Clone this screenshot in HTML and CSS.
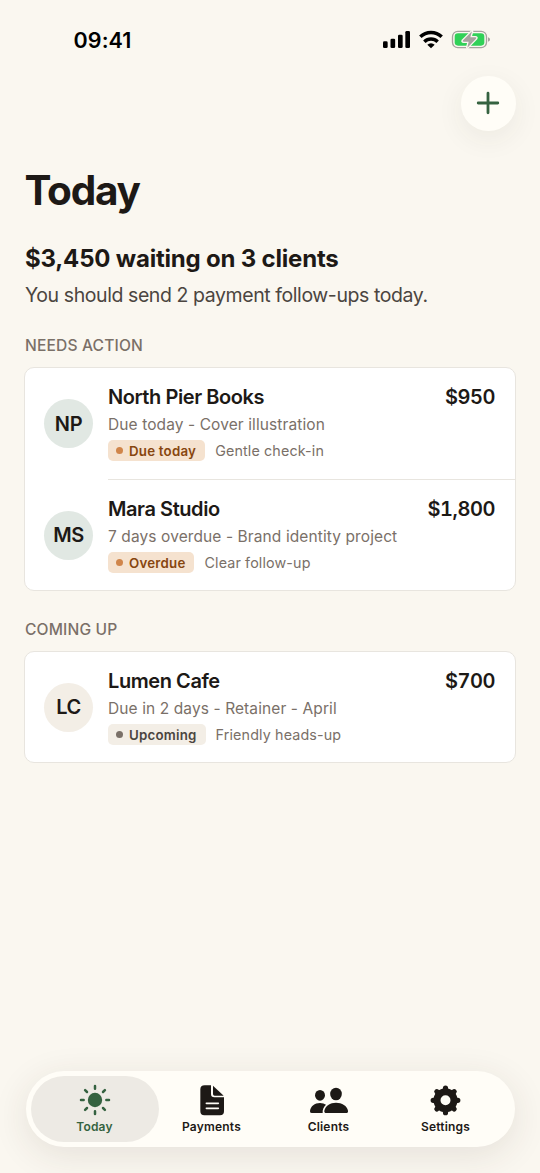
FILE: index.html
```html
<!DOCTYPE html>
<html lang="en">
<head>
<meta charset="utf-8">
<title>Today</title>
<link rel="stylesheet" href="styles.css">
</head>
<body>
<div class="screen">
  <header class="status">
    <span class="time">09:41</span>
    <svg class="status-icons" viewBox="0 0 324 57" aria-hidden="true">
      <g fill="#000">
        <rect x="0" y="34" width="14" height="20" rx="4"/>
        <rect x="22.500" y="26" width="14" height="28" rx="4"/>
        <rect x="45" y="14" width="14" height="40" rx="4"/>
        <rect x="67" y="3" width="14" height="51" rx="4"/>
      </g>
      <g fill="none" stroke="#000" stroke-width="10.500">
        <path d="M112 20.500a46 46 0 0 1 64 0"/>
        <path d="M124 35a29 29 0 0 1 40 0"/>
      </g>
      <path d="M144 55l-11-11a15.500 15.500 0 0 1 22 0z"/>
      <rect x="208.500" y="4" width="102" height="49" rx="16" fill="none" stroke="#a5a39f" stroke-width="4"/>
      <path d="M315 21.500c8 2.500 8 11 0 13.500z" fill="#a5a39f"/>
      <rect x="215" y="10" width="89" height="37" rx="10" fill="#30d158"/>
      <path d="M267 4L240 31Q237 35 242 35H257L253 53L279 26Q282 22 277 22H262Z" fill="#a5a39f" stroke="#faf7f0" stroke-width="8" stroke-linejoin="round" paint-order="stroke"/>
    </svg>
  </header>
  <div class="toolbar">
    <button class="add" aria-label="Add">
      <svg viewBox="0 0 24 24"><path d="M12 2.200v19.600M2.200 12h19.600"/></svg>
    </button>
  </div>
  <main class="content">
    <h1 class="title">Today</h1>
    <p class="summary">$3,450 waiting on 3 clients</p>
    <p class="hint">You should send 2 payment follow-ups today.</p>

    <h2 class="section">NEEDS ACTION</h2>
    <section class="card">
      <article class="row">
        <div class="avatar">NP</div>
        <div class="info">
          <div class="line"><span class="name">North Pier Books</span><span class="amount">$950</span></div>
          <div class="detail">Due today - Cover illustration</div>
          <div class="meta"><span class="badge"><i class="dot"></i>Due today</span><span class="note">Gentle check-in</span></div>
        </div>
      </article>
      <article class="row">
        <div class="avatar">MS</div>
        <div class="info">
          <div class="line"><span class="name">Mara Studio</span><span class="amount">$1,800</span></div>
          <div class="detail">7 days overdue - Brand identity project</div>
          <div class="meta"><span class="badge"><i class="dot"></i>Overdue</span><span class="note">Clear follow-up</span></div>
        </div>
      </article>
    </section>

    <h2 class="section">COMING UP</h2>
    <section class="card">
      <article class="row calm">
        <div class="avatar">LC</div>
        <div class="info">
          <div class="line"><span class="name">Lumen Cafe</span><span class="amount">$700</span></div>
          <div class="detail">Due in 2 days - Retainer - April</div>
          <div class="meta"><span class="badge"><i class="dot"></i>Upcoming</span><span class="note">Friendly heads-up</span></div>
        </div>
      </article>
    </section>
  </main>
  <nav class="tabs">
    <a class="tab active">
      <svg viewBox="-60 -48 120 96"><circle r="21.500"/><g stroke="currentColor" stroke-width="7.500" stroke-linecap="round"><path d="M0-42v8M0 42v-8M-42 0h8M42 0h-8M-29.700-29.700l5.700 5.700M29.700-29.700l-5.700 5.700M-29.700 29.700l5.700-5.700M29.700 29.700l-5.700-5.700"/></g></svg>
      <span>Today</span>
    </a>
    <a class="tab">
      <svg viewBox="-60 -48 120 96"><path d="M-22-44H-3V-18Q-3-8 7-8H36V34Q36 46 24 46H-23Q-35 46-35 34V-32Q-35-44-22-44Z"/><path d="M3-43L35-13H8Q3-13 3-18Z"/><path d="M-17 10H19M-17 25H19" stroke="#fffdf7" stroke-width="5" stroke-linecap="round"/></svg>
      <span>Payments</span>
    </a>
    <a class="tab">
      <svg viewBox="-60 -48 120 96"><ellipse cx="-27" cy="-14" rx="15" ry="16"/><path d="M-52 39Q-58 39-57 33C-55 18-43 9-27 9Q-16 9-9 14C-16 20-20 29-19 39Z"/><ellipse cx="21" cy="-18" rx="17.500" ry="19"/><path d="M-8 39Q-15 39-14 32C-11 17 3 8 21 8S54 17 57 32Q58 39 51 39Z"/></svg>
      <span>Clients</span>
    </a>
    <a class="tab">
      <svg viewBox="-60 -48 120 96"><g transform="translate(-1.500 1)" stroke="currentColor"><circle r="25.500" fill="none" stroke-width="21"/><path d="M0-37v6M0 37v-6M-37 0h6M37 0h-6M-26-26l4 4M26-26l-4 4M-26 26l4-4M26 26l-4-4" stroke-width="15.500" stroke-linecap="round"/></g></svg>
      <span>Settings</span>
    </a>
  </nav>
</div>
</body>
</html>
```
FILE: styles.css
```css
* { box-sizing: border-box; }
body { margin: 0; background: #faf7f0; color: #1d1916; font-family: Inter, "Liberation Sans", sans-serif; }
h1, h2, p { margin: 0; }
.screen { height: 1173px; display: flex; flex-direction: column; overflow: hidden; }
.status { height: 76px; flex: none; display: flex; justify-content: space-between; align-items: flex-start; padding: 30px 49px 0 73.500px; }
.time { font-size: 21.500px; line-height: 20px; font-weight: 600; letter-spacing: .1px; color: #000; }
.status-icons { width: 108px; height: 19px; }
.toolbar { display: flex; justify-content: flex-end; padding: 0 24.500px 0 0; height: 55px; flex: none; }
.add { width: 54.500px; height: 54.500px; padding: 0; border: 0; border-radius: 50%; background: #fffdf7; display: grid; place-items: center; box-shadow: 0 8px 28px rgba(60, 50, 40, .07); }
.add svg { width: 24px; height: 24px; fill: none; stroke: #356240; stroke-width: 2.800; stroke-linecap: round; }
.content { flex: 1; padding: 34px 24px 0; }
.title { padding-left: .5px; font-size: 40.500px; line-height: 51px; font-weight: 700; letter-spacing: -1.250px; }
.summary { margin-top: 27px; padding-left: 1px; font-size: 24px; line-height: 32px; font-weight: 700; letter-spacing: -.2px; }
.hint { margin-top: 8px; padding-left: 1px; font-size: 19.500px; line-height: 24px; letter-spacing: -.42px; color: #4b4540; }
.section { margin-top: 28px; padding-left: 1px; font-size: 15.600px; line-height: 22px; font-weight: 500; letter-spacing: .15px; color: #7a7068; }
.card { margin-top: 10px; background: #fff; border: 1px solid #e8e5df; border-radius: 10px; }
.row { display: flex; align-items: center; height: 111px; padding-left: 19px; }
.row.calm { height: 110px; }
.avatar { width: 49px; height: 49px; flex: none; border-radius: 50%; background: #e1e8e3; display: grid; place-items: center; font-size: 20px; font-weight: 600; letter-spacing: -.4px; }
.row + .row .avatar { margin-top: 1px; }
.info { flex: 1; height: 100%; margin-left: 15px; padding: 16px 20px 0 0; }
.row + .row .info { border-top: 1px solid #e8e5df; }
.line { display: flex; justify-content: space-between; font-size: 20px; line-height: 26px; font-weight: 600; letter-spacing: -.43px; }
.amount { font-variant-numeric: tabular-nums; }
.detail { margin-top: 4px; font-size: 15.500px; line-height: 22px; letter-spacing: .1px; color: #7a7068; }
.meta { margin-top: 4px; display: flex; align-items: center; gap: 10px; height: 21px; font-size: 14.300px; letter-spacing: .14px; color: #7a7068; }
.badge { display: flex; align-items: center; gap: 6px; height: 21px; padding: 0 9px 0 8px; border-radius: 5px; background: #f5e2cf; color: #87460f; font-size: 13.300px; font-weight: 600; letter-spacing: .22px; }
.dot { width: 7px; height: 7px; border-radius: 50%; background: #d0854a; }
.calm .avatar, .calm .badge { background: #f3eee6; }
.calm .badge { color: #4b4540; }
.calm .dot { background: #7a7068; }
.tabs { flex: none; display: flex; height: 76px; margin: 0 25.500px 26px; padding: 5px 5px; border-radius: 38px; background: #fffdf7; box-shadow: 0 8px 36px rgba(60, 50, 40, .11); }
.tab { width: 128px; height: 66px; flex: none; margin-right: -11px; padding-top: 8px; border-radius: 33px; display: flex; flex-direction: column; align-items: center; font-size: 12px; line-height: 16px; font-weight: 600; letter-spacing: .2px; color: #1d1916; }
.tab svg { width: 40px; height: 32px; fill: currentColor; margin-bottom: 3px; }
.tab.active { background: #edeae4; color: #356240; }
```
